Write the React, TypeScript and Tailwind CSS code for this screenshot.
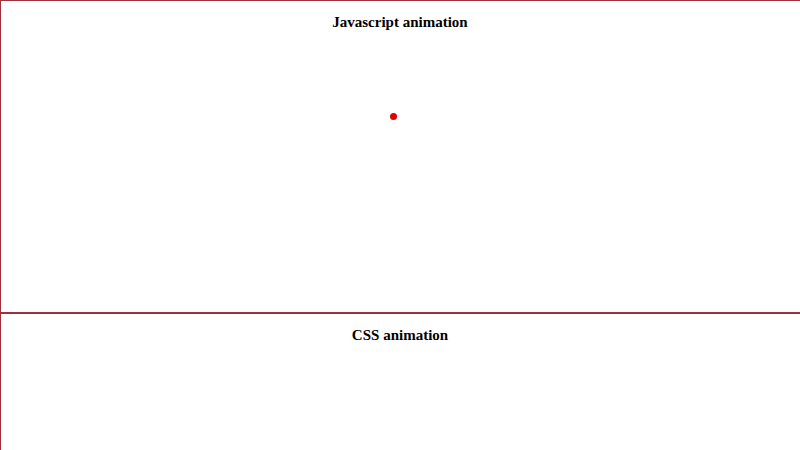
export default function App() {
  return (
    <div className="w-[800px] h-[450px] overflow-hidden bg-white font-['Liberation_Serif',serif]">
      <section className="relative h-[313px] w-[820px] border border-[#a0303a]">
        <h3 className="w-[798px] pt-[11px] text-center text-[15px] font-bold leading-5 text-black">
          Javascript animation
        </h3>
        {/* moving ball, current frame position */}
        <div className="absolute left-[389px] top-[112px] h-[7px] w-[7px] rounded-full bg-[#e00000]" />
      </section>
      <section className="relative h-[313px] w-[820px] border border-[#a0303a]">
        <h3 className="w-[798px] pt-[11px] text-center text-[15px] font-bold leading-5 text-black">
          CSS animation
        </h3>
      </section>
    </div>
  );
}
